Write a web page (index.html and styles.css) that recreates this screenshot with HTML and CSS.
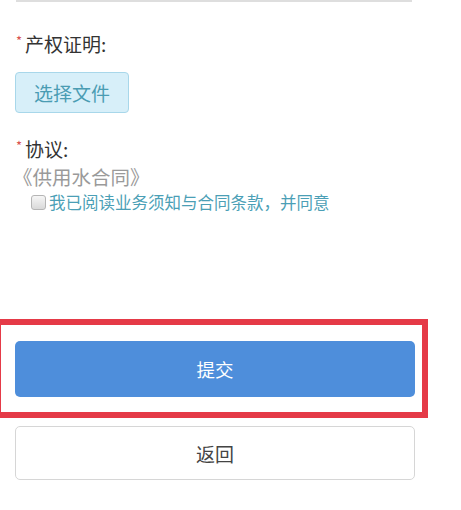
FILE: index.html
```html
<!DOCTYPE html>
<html lang="zh-CN">
<head>
<meta charset="utf-8">
<link rel="stylesheet" href="styles.css">
</head>
<body>
<div class="page">
  <div class="input-stub"></div>
  <div class="field">
    <div class="label"><span class="req">*</span>产权证明:</div>
    <button class="file-btn">选择文件</button>
  </div>
  <div class="field agree-field">
    <div class="label"><span class="req">*</span>协议:</div>
    <div class="contract">《供用水合同》</div>
    <label class="agree"><span class="box"></span>我已阅读业务须知与合同条款，并同意</label>
  </div>
  <div class="highlight">
    <button class="btn primary">提交</button>
  </div>
  <button class="btn back">返回</button>
</div>
</body>
</html>
```
FILE: styles.css
```css
html, body {
  margin: 0;
  padding: 0;
  background: #fff;
}
body {
  font-family: "Noto Sans CJK SC", "Noto Sans", sans-serif;
  color: #333;
  overflow: hidden;
}
.page {
  padding: 0 46px 0 15px;
  display: flex;
  flex-direction: column;
}
.input-stub {
  height: 0;
  margin: 0 3px 0 1px;
  border-bottom: 2px solid #dedede;
}
.field {
  display: flex;
  flex-direction: column;
  align-items: flex-start;
}
.label {
  margin-top: 29px;
  font-size: 19px;
  line-height: 26px;
  color: #333;
  position: relative;
  padding-left: 10px;
}
.req {
  position: absolute;
  left: 1px;
  top: -3px;
  color: #d9534f;
  font-size: 13px;
}
.file-btn {
  margin-top: 15px;
  width: 114px;
  height: 41px;
  background: #d7eff9;
  border: 1px solid #a8d7ea;
  border-radius: 4px;
  color: #4a9cb3;
  font-family: inherit;
  font-size: 19px;
  padding: 0;
  line-height: 1;
}
.agree-field .label {
  margin-top: 23px;
}
.contract {
  margin-top: 2px;
  margin-left: -2px;
  font-size: 19.5px;
  line-height: 26px;
  color: #9a9a9a;
}
.agree {
  margin-top: 1px;
  margin-left: 16px;
  display: flex;
  align-items: center;
  font-size: 16.5px;
  line-height: 22px;
  color: #4b9fb6;
}
.box {
  width: 13px;
  height: 13px;
  border: 1px solid #b5b5b5;
  border-radius: 3px;
  background: linear-gradient(#f6f6f6, #d9d9d9);
  margin-right: 3px;
}
.highlight {
  margin-top: 106px;
  margin-left: -20px;
  margin-right: -13px;
  border: 6px solid #e53a47;
  padding: 16px 7px 15px 14px;
}
.btn {
  display: block;
  width: 400px;
  border-radius: 5px;
  font-family: inherit;
  font-size: 18.5px;
  padding: 0;
}
.primary {
  height: 56px;
  background: #4e8edb;
  border: none;
  color: #fff;
}
.back {
  margin-top: 8px;
  height: 54px;
  background: #fff;
  border: 1px solid #d6d6d6;
  color: #444;
  font-size: 19px;
}
```
